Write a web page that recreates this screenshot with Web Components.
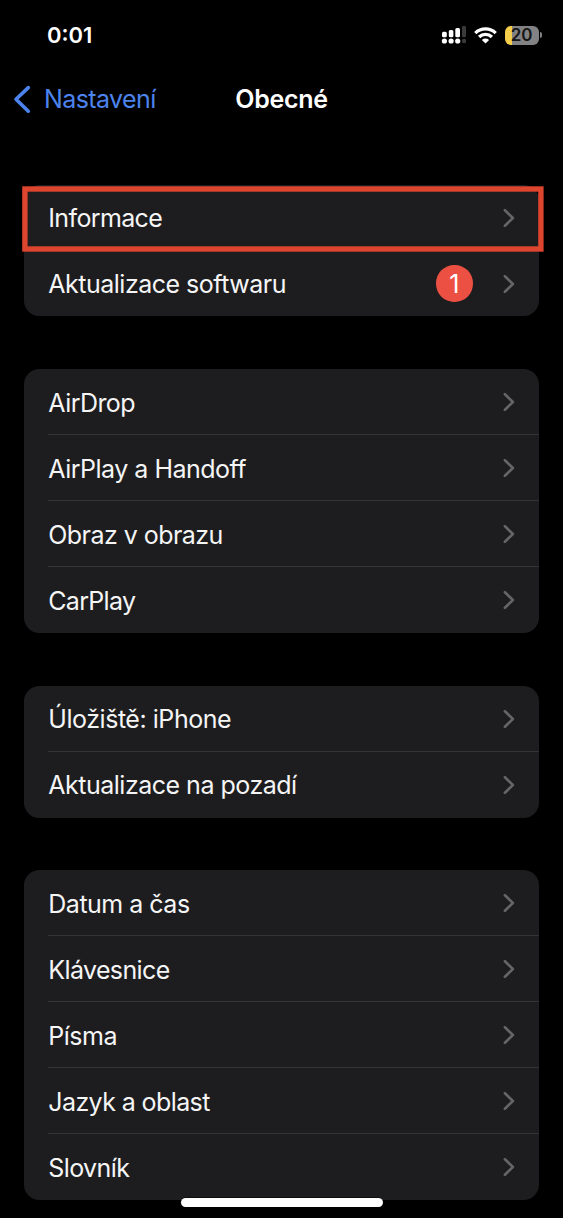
<!DOCTYPE html>
<html lang="cs">
<head>
<meta charset="utf-8">
<title>Obecné</title>
<style>
html,body{margin:0;background:#000;height:1218px;overflow:hidden}
body{font-family:Inter,"Noto Sans",sans-serif;color:#f5f5f6}
</style>
</head>
<body>
<settings-screen>
  <status-bar slot="status" time="0:01" battery="20"></status-bar>
  <nav-bar slot="nav"><span slot="back">Nastavení</span><span slot="title">Obecné</span></nav-bar>
  <settings-group style="--drop:0px">
    <settings-row highlighted style="--ls:-.64px">Informace</settings-row>
    <settings-row badge="1" style="--ls:-.5px;--row-height:65px;--drop:1px">Aktualizace softwaru</settings-row>
  </settings-group>
  <settings-group>
    <settings-row style="--ls:-.55px">AirDrop</settings-row>
    <settings-row style="--ls:-.5px">AirPlay a Handoff</settings-row>
    <settings-row style="--ls:-.55px">Obraz v obrazu</settings-row>
    <settings-row style="--ls:-.7px">CarPlay</settings-row>
  </settings-group>
  <settings-group style="--drop:0px;--gap:52px">
    <settings-row style="--ls:-.46px">Úložiště: iPhone</settings-row>
    <settings-row style="--ls:-.5px">Aktualizace na pozadí</settings-row>
  </settings-group>
  <settings-group>
    <settings-row style="--ls:-.5px">Datum a čas</settings-row>
    <settings-row style="--ls:-.62px">Klávesnice</settings-row>
    <settings-row style="--ls:-.5px">Písma</settings-row>
    <settings-row style="--ls:-.6px">Jazyk a oblast</settings-row>
    <settings-row style="--ls:-.6px">Slovník</settings-row>
  </settings-group>
</settings-screen>
<script>
const define=(name,render)=>customElements.define(name,class extends HTMLElement{
  constructor(){super();this.attachShadow({mode:'open'});}
  connectedCallback(){this.shadowRoot.innerHTML=render(this);}
});

define('settings-screen',()=>`
<style>
:host{display:block;position:relative;width:563px;height:1218px;overflow:hidden;background:#000}
main{display:flex;flex-direction:column;padding:57px 24.3px 0 24px}
.home{position:absolute;left:181px;top:1198px;width:202px;height:8.5px;border-radius:5px;background:#fff;box-shadow:0 0 0 .5px #000}
</style>
<slot name="status"></slot><slot name="nav"></slot>
<main><slot></slot></main><div class="home"></div>`);

define('status-bar',el=>`
<style>
:host{display:flex;align-items:center;height:70px;box-sizing:border-box;padding:0 21px 0 47px;color:#fff}
.time{font-size:22px;font-weight:600;letter-spacing:0;line-height:26px;flex:1}
.signal{width:25px;height:18px;margin-right:8px}
.wifi{width:23px;height:17px;margin-right:8px}
.battery{position:relative;display:flex;width:34px;height:19px;border-radius:6px;background:linear-gradient(90deg,#f5ce4c 7px,#828284 7px);align-items:center;justify-content:center;color:#161616;font-size:17px;font-weight:600;line-height:19px;letter-spacing:-.2px}
.cap{width:2.5px;height:6px;margin-left:1px;border-radius:0 3px 3px 0;background:#828284}
</style>
<span class="time">${el.getAttribute('time')}</span>
<svg class="signal" viewBox="0 0 25 18"><g fill="#fff"><rect x="1" y="5.7" width="4.8" height="5.6" rx="1.5"/><rect x="7.8" y="4" width="4.6" height="7.3" rx="1.5"/><rect x="14.3" y="2" width="4.7" height="9.3" rx="1.5"/><circle cx="3.4" cy="15" r="2.6"/><circle cx="10.1" cy="15" r="2.6"/><circle cx="16.7" cy="15" r="2.6"/></g><g fill="#3a3a3c"><rect x="21" y="0" width="4" height="11.3" rx="1.4"/><circle cx="23" cy="15" r="2.2"/></g></svg>
<svg class="wifi" viewBox="0 0 23 17" fill="none" stroke="#fff" stroke-width="3.3"><path d="M1.3 6.1a14.6 14.6 0 0 1 20.4 0"/><path d="M5.1 10a9.2 9.2 0 0 1 12.8 0"/><path d="M7.9 12.9a5.1 5.1 0 0 1 7.2 0l-3.6 3.7z" fill="#fff" stroke="none"/></svg>
<span class="battery">${el.getAttribute('battery')}</span><i class="cap"></i>`);

define('nav-bar',()=>`
<style>
:host{display:grid;grid-template-columns:1fr auto 1fr;align-items:center;height:58px;padding:0 13px}
.back{display:flex;align-items:center;gap:13px;color:#4c83ed;font-size:25px;letter-spacing:-.6px;line-height:30px}
svg{width:18px;height:29px}
.title{color:#fff;font-size:25px;font-weight:600;line-height:30px;letter-spacing:-.3px}
</style>
<div class="back"><svg viewBox="0 0 18 29" fill="none" stroke="currentColor" stroke-width="3.6" stroke-linecap="round" stroke-linejoin="round"><path d="M15.3 2.6 3 14.2l12.3 12"/></svg><slot name="back"></slot></div>
<div class="title"><slot name="title"></slot></div>`);

define('settings-group',()=>`
<style>
:host{display:block;border-radius:15.5px;background:#1d1d1f;margin-bottom:var(--gap,53px)}
::slotted(:not(:last-child)){--line:#343436}
</style><slot></slot>`);

define('settings-row',el=>`
<style>
:host{display:flex;position:relative;box-sizing:border-box;height:var(--row-height,66px);margin-left:24.3px;padding-right:23.7px;align-items:center;background:linear-gradient(var(--line,transparent),var(--line,transparent)) 0 100%/100% 1px no-repeat}
.label{flex:1;font-size:25px;line-height:30px;padding-top:var(--drop,2px);letter-spacing:var(--ls,0);white-space:nowrap}
.badge{box-sizing:border-box;width:36.5px;height:36.5px;padding-top:1px;border-radius:50%;background:#ec5043;color:#fff;font-size:25px;line-height:36.5px;text-align:center;margin-right:30.5px}
.chevron{width:12px;height:20px}
.frame{position:absolute;left:-26.3px;top:1px;width:522px;height:66px;overflow:visible}
</style>
<span class="label"><slot></slot></span>
${el.hasAttribute('badge')?`<span class="badge">${el.getAttribute('badge')}</span>`:''}
<svg class="chevron" viewBox="0 0 12 20" fill="none" stroke="#656568" stroke-width="2.6" stroke-linecap="round" stroke-linejoin="round"><path d="M1.9 2.2 9.9 10l-8 7.8"/></svg>
${el.hasAttribute('highlighted')?`<svg class="frame" viewBox="0 0 522 66"><rect x="2.9" y="3" width="516" height="60" fill="none" stroke="#dd452e" stroke-width="5.4"/></svg>`:''}`);
</script>
</body>
</html>
